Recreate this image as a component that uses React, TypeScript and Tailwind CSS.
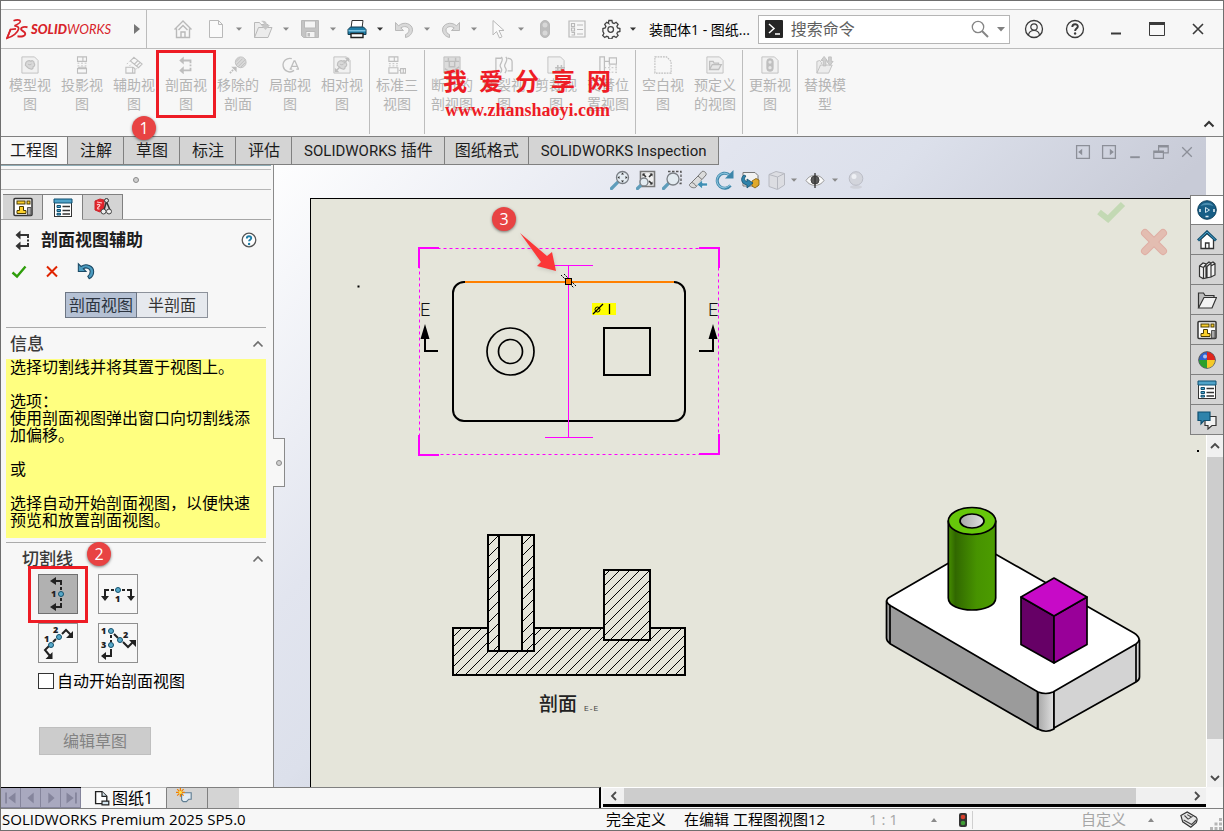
import type { ReactNode } from 'react';
import clsx from 'clsx';

type IconProps = { children: ReactNode; size?: string; box?: string; className?: string };

function Icon({ children, size = 'size-5', box = '0 0 20 20', className }: IconProps) {
  return (
    <svg viewBox={box} className={clsx('shrink-0', size, className)} fill="none" stroke="currentColor" aria-hidden="true">
      {children}
    </svg>
  );
}

function Caret({ className = 'text-[#8a8a8a]' }: { className?: string }) {
  return (
    <svg viewBox="0 0 8 8" className={clsx('size-2 shrink-0', className)} aria-hidden="true">
      <path d="M1 2.500h6L4 5.800z" fill="currentColor" />
    </svg>
  );
}

function Badge({ n, className }: { n: number; className: string }) {
  return (
    <span
      className={clsx(
        'absolute z-20 flex size-6 items-center justify-center rounded-full bg-[#e84343] text-base leading-none text-white shadow-[0_1px_3px_rgba(0,0,0,0.5)]',
        className,
      )}
    >
      {n}
    </span>
  );
}

/* ---------- shared glyphs ---------- */

const sheetOutline = <path d="M1 1h14l4 4v14H1z" fill="#f1f1f1" />;

const sectionGlyph = (
  <g strokeWidth="2">
    <path d="M6 5h9v3M15 9.500v2M15 13v3H6" />
    <path d="M7.500 .5v9L2.500 5zM7.500 11.500v9l-5-4.500z" fill="currentColor" stroke="none" />
  </g>
);

const drawingGlyph = (
  <>
    <rect x="1" y="1.500" width="18" height="17" rx="1" fill="#fff" stroke="#333" strokeWidth="1.500" />
    <rect x="4" y="4" width="8" height="3" fill="#fbd02c" stroke="#4a3b00" />
    <rect x="14" y="4" width="3" height="3" fill="#fbd02c" stroke="#4a3b00" />
    <path d="M6.500 9.500h4v4h2.500v3H4v-3h2.500z" fill="#fbd02c" stroke="#4a3b00" />
    <path d="M14.500 18v-7.500H18V18z" fill="#aaa" stroke="#555" />
  </>
);

const propertyGlyph = (
  <>
    <rect x="1.500" y="1.500" width="17" height="17" fill="#fff" stroke="#333" />
    <path d="M1 1h18v4H1z" fill="#4fa3c9" stroke="#0f4f70" />
    <path d="M4 7.500h3.500v2H4zM4 11.500h3.500v2H4zM4 15.300h3.500v1.700H4z" fill="#4fa3c9" stroke="#0f4f70" />
    <path d="M9.500 8.500H17M9.500 12.500H17M9.500 16H17" stroke="#333" strokeWidth="1.300" />
  </>
);

/* ---------- title bar ---------- */

function DsLogo() {
  return (
    <Icon box="0 0 22 21" size="h-[21px] w-[22px]" className="text-[#d8232a]">
      <path d="M7.500 1.800C10 .8 14 .4 14.300 2.200 14.500 3.700 11 5.700 8.500 6.800c2.500.2 4.700 1 4 3.500C11.700 13.500 7 17.500 1 19.300L4.800 10" strokeWidth="1.700" />
      <path d="M1 19.300 4.500 10.500l5.500-.7" strokeWidth="1.700" />
      <path d="M21.500 8.200c-3-.7-6.500-.2-6.500 1.700 0 2 4.500 2.600 4.300 5.100-.2 2.200-3.800 3-7.800 2.300" strokeWidth="1.900" />
    </Icon>
  );
}

const titleTools: { label: string; caret?: boolean; dark?: boolean; glyph: ReactNode }[] = [
  {
    label: '新建',
    caret: true,
    glyph: <path d="M3.500 1.500h9l4 4v13h-13zM12.500 1.500v4h4" fill="#fafafa" />,
  },
  {
    label: '打开',
    caret: true,
    glyph: (
      <>
        <path d="M1.500 18.500v-15h5l1.500 2h7v3M1.500 18.500l4-10H19l-4 10z" fill="#ececec" />
        <path d="M8 2c4-1 6 1 6 4h3l-4.500 5L8 6h3c0-2-1-3-3-4z" fill="#c6c6c6" stroke="none" />
      </>
    ),
  },
  {
    label: '保存',
    caret: true,
    glyph: (
      <>
        <path d="M1.500 1.500h17v17h-15l-2-2z" fill="#c4c4c4" />
        <path d="M4.500 2h11v7h-11z" fill="#f4f4f4" />
        <path d="M6 12.500h9v6H6z" fill="#f4f4f4" />
        <path d="M7.500 14h2.500v3.500H7.500z" fill="#bbb" stroke="none" />
      </>
    ),
  },
  {
    label: '打印',
    caret: true,
    dark: true,
    glyph: (
      <>
        <path d="M5 1.500h11l-1 8H4z" fill="#fff" stroke="#333" />
        <path d="M1 10.500 3.500 8h13L19 10.500v5H1z" fill="#1f7da6" stroke="#123c50" />
        <path d="M1.500 11h17v1.500h-17z" fill="#7fc4e2" stroke="none" />
        <path d="M4 14.500h12v4H4z" fill="#fff" stroke="#222" strokeWidth="1.400" />
      </>
    ),
  },
  {
    label: '撤消',
    caret: true,
    glyph: <path d="M1.500 3.500v8h8L6.800 9c3-2.500 8-1.500 8.200 1.800.1 2.400-1.500 4-3.500 4.700v3c4-.8 7-4 7-7.700 0-6-8.500-9-14-4z" fill="#d9d9d9" />,
  },
  {
    label: '重做',
    caret: true,
    glyph: <path d="M18.500 3.500v8h-8L13.200 9C10.200 6.500 5.200 7.500 5 10.800c-.1 2.400 1.500 4 3.500 4.700v3c-4-.8-7-4-7-7.700 0-6 8.500-9 14-4z" fill="#d9d9d9" />,
  },
  {
    label: '选择',
    caret: true,
    glyph: <path d="M5 1.500v14.500l3.500-3.500 3 6.500 2.500-1.200-3-6.300H16z" fill="#fafafa" />,
  },
];

function TitleBar() {
  return (
    <header className="flex h-[39px] shrink-0 items-center border-b border-[#bcbcbc]">
      <div className="flex h-full w-[146px] shrink-0 items-center border-r border-[#bcbcbc] pl-[5px]">
        <DsLogo />
        <span className="ml-[3px] font-['Lato',sans-serif] text-[13px] leading-none text-[#d8232a] italic">
          <b className="font-black">SOLID</b>WORKS
        </span>
        <button aria-label="展开菜单" className="mr-[6px] ml-auto">
          <Icon box="0 0 6 10" size="h-[10px] w-[6px]">
            <path d="M0 0l6 5-6 5z" fill="#777" stroke="none" />
          </Icon>
        </button>
      </div>

      <div className="flex shrink-0 items-center gap-[10px] pl-[26px] text-[#b9b9b9]">
        <button aria-label="主页" className="mr-[3px]">
          <Icon>
            <path d="M1.500 10.500 10 2l8.500 8.500M3.500 9.500v9h13v-9M8 18.500V13h4v5.500M5.500 11l4.500-4.500 4.500 4.500" strokeWidth="1.400" />
          </Icon>
        </button>
        {titleTools.map((t) => (
          <span key={t.label} className="flex items-center gap-[9px]">
            <button aria-label={t.label}>
              <Icon>{t.glyph}</Icon>
            </button>
            <button aria-label={`${t.label}选项`}>
              <Caret className={t.dark ? 'text-[#333]' : undefined} />
            </button>
          </span>
        ))}
        <button aria-label="重建">
          <Icon>
            <rect x="5.500" y="1.500" width="9" height="17" rx="4.500" fill="#bdbdbd" />
            <circle cx="10" cy="6" r="2.500" fill="#d8d8d8" stroke="none" />
            <circle cx="10" cy="14" r="2.500" fill="#d8d8d8" stroke="none" />
          </Icon>
        </button>
        <button aria-label="文件属性" className="ml-[2px]">
          <Icon>
            <path d="M2 2h16v16H2zM4.500 4.500h3v3h-3zM4.500 9h3v3h-3zM4.500 13.500h3v2.500h-3M10 6h6M10 10.500h6M10 15h6" strokeWidth="1.200" />
          </Icon>
        </button>
        <span className="ml-1 flex items-center gap-2 text-[#444]">
          <button aria-label="选项">
            <Icon>
              <path
                d="M8.500 2h3l.5 2.200 1.700.8 2-1.200 2 2-1.200 2 .7 1.700 2.300.5v3l-2.300.5-.7 1.500 1.200 2-2 2-2-1.200-1.700.7-.5 2h-3l-.5-2-1.700-.7-2 1.200-2-2 1.200-2-.7-1.500L2.500 13v-3l2.300-.5.7-1.700-1.200-2 2-2 2 1.200L8 4.200z"
                transform="translate(-.6 -.5)"
                strokeWidth="1.300"
              />
              <circle cx="9.700" cy="10.500" r="2.800" strokeWidth="1.300" />
            </Icon>
          </button>
          <Caret className="text-[#333]" />
        </span>
      </div>

      <h1 className="ml-[12px] shrink-0 text-[14px] whitespace-nowrap text-black">装配体1 - 图纸...</h1>

      <label className="ml-2 flex h-[29px] min-w-0 flex-1 items-center border border-[#b5b5b5] bg-white pr-1 pl-[6px]">
        <Icon box="0 0 18 18" size="size-[18px]" className="text-white">
          <rect width="18" height="18" rx="1" fill="#262626" stroke="none" />
          <path d="M4 4l5 4.500L4 13M10 14h5" strokeWidth="1.500" />
        </Icon>
        <input
          aria-label="搜索命令"
          placeholder="搜索命令"
          className="ml-2 min-w-0 flex-1 bg-transparent text-base text-black outline-none placeholder:text-[#5f5f5f]"
        />
        <Icon box="0 0 18 18" size="size-[18px]" className="mr-2 text-[#858585]">
          <circle cx="7" cy="7" r="5.700" strokeWidth="1.300" />
          <path d="M11 11l6 6" strokeWidth="2" />
        </Icon>
        <svg viewBox="0 0 8 5" className="h-[5px] w-2">
          <path d="M0 0h8L4 4.500z" fill="#808080" />
        </svg>
      </label>

      <div className="ml-[3px] flex shrink-0 items-center pr-[5px] text-[#3a3a3a] *:flex *:w-[41px] *:justify-center">
        <button aria-label="登录">
          <Icon>
            <circle cx="10" cy="10" r="8.500" strokeWidth="1.300" />
            <circle cx="10" cy="8" r="3.200" strokeWidth="1.200" />
            <path d="M4.500 16c.5-3 2.500-4.500 5.500-4.500s5 1.500 5.500 4.500" strokeWidth="1.200" />
          </Icon>
        </button>
        <button aria-label="帮助">
          <Icon>
            <circle cx="10" cy="10" r="8.500" strokeWidth="1.300" />
            <path d="M7.300 8c0-3.600 5.500-3.600 5.500-.5 0 2-2.700 2.200-2.700 4.500" strokeWidth="1.900" />
            <circle cx="10.100" cy="14.500" r="1.200" fill="currentColor" stroke="none" />
          </Icon>
        </button>
        <button aria-label="最小化">
          <Icon>
            <path d="M5 14.500h10" strokeWidth="2" />
          </Icon>
        </button>
        <button aria-label="最大化">
          <Icon>
            <path d="M2.500 3.500h15v13h-15z" strokeWidth="1" />
            <path d="M2 4.500h16" strokeWidth="3" />
          </Icon>
        </button>
        <button aria-label="关闭">
          <Icon>
            <path d="M5 5l10 10M15 5L5 15" strokeWidth="1.600" />
          </Icon>
        </button>
      </div>
    </header>
  );
}

/* ---------- ribbon ---------- */

type RibbonItem = { label: string; glyph: ReactNode; marked?: boolean };

const blob = (
  <path
    d="M5 9c0-3 4-5 6-3 1-1.500 4-.5 3.500 2 1.500 1.500.500 3.500-1 4 .500 2-2 3.500-3.500 2-2 .500-2.500-1.500-4-2.500-1-.500-1.500-1.500-1-2.500zM8 9c1 1 3 1 3.500-.500"
    fill="#d8d8d8"
    strokeWidth="1.300"
  />
);

const ribbonGroups: RibbonItem[][] = [
  [
    {
      label: '模型视图',
      glyph: (
        <>
          {sheetOutline}
          {blob}
        </>
      ),
    },
    {
      label: '投影视图',
      glyph: (
        <>
          <path d="M5 1h10v5H5zM11 1v5M5 14h10v5H5zM5 14l2-1.500h7l1 1.500" strokeWidth="1.200" />
          <path d="M5 8h10M5 11h10" strokeDasharray="2 2" />
        </>
      ),
    },
    {
      label: '辅助视图',
      glyph: (
        <>
          <path d="M10 1.500l9 7.500-4 4-9-7.500zM14.500 5l-4 4M17 7l-4 4" strokeWidth="1.200" />
          <path d="M1 12.500h7.500V19H1zM8.500 12.500l2.500 1.500v5H8" strokeWidth="1.200" />
          <path d="M2 9l4-4M5 11l3-3M12 15l2-2" strokeDasharray="2 2" />
        </>
      ),
    },
    { label: '剖面视图', glyph: sectionGlyph, marked: true },
    {
      label: '移除的剖面',
      glyph: (
        <>
          <circle cx="13" cy="7" r="6" fill="#d9d9d9" />
          <path d="M8 10l7-7M10 12l8-8M8 6l4-4M13 12.500l5-5" />
          <path d="M1 19l4-4" strokeWidth="2" strokeDasharray="2 1" />
          <path d="M2.500 12h6v6z" fill="currentColor" stroke="none" />
        </>
      ),
    },
    {
      label: '局部视图',
      glyph: (
        <>
          <path d="M12 3A7.500 7.500 0 1 0 14.500 16" strokeWidth="1.500" />
          <path d="M10.500 14.500l4-9h1l4 9M12 11.500h6M9.500 14.500h3M17 14.500h3" strokeWidth="1.400" />
        </>
      ),
    },
    {
      label: '相对视图',
      glyph: (
        <>
          {sheetOutline}
          {blob}
          <path d="M3 17l5-5M12 8l5-5" strokeWidth="1.600" />
          <path d="M2 13v5h5zM13 2h5v5z" fill="currentColor" stroke="none" />
        </>
      ),
    },
  ],
  [
    {
      label: '标准三视图',
      glyph: (
        <>
          <path d="M1 1h10v5H1zM7 1v5M1 13h10v6H1zM14 14h5.500v5H14zM17 14v5" strokeWidth="1.200" />
          <path d="M1 8.500h10M1 11h10M12 16h2" strokeDasharray="2 2" />
        </>
      ),
    },
  ],
  [
    {
      label: '断开的剖视图',
      glyph: (
        <>
          <path d="M1 1h18v18H1z" fill="#dcdcdc" />
          <path d="M2 6h16M6 2v4M14 2v4M7 6v6h6V6M2 14l6 4M12 16l6-4" strokeWidth="1.600" />
        </>
      ),
    },
    {
      label: '断裂视图',
      glyph: <path d="M7 2.500H1v14h5M7 1c4 4-3 8-1 11s2 4 0 7M12 1c4 4-3 8-1 11s2 4 0 7M14 2.500c2 0 5 1 5 4v10h-5" strokeWidth="1.400" />,
    },
    {
      label: '剪裁视图',
      glyph: (
        <>
          {sheetOutline}
          <path d="M9 13h11M12 10v9M16 10v9M9 16h11" strokeWidth="1.700" />
        </>
      ),
    },
    {
      label: '交替位置视图',
      glyph: (
        <>
          <path d="M1 1h5v18H1zM6 6h6M11.500 2h8v7h-8z" strokeWidth="1.400" />
          <path d="M6 13h14M6 18h14M12 10v9M19 10v9" strokeDasharray="2 2" />
        </>
      ),
    },
  ],
  [
    { label: '空白视图', glyph: <path d="M1 1h13l5 5v13H1z" strokeWidth="1.200" strokeDasharray="2 1" /> },
    {
      label: '预定义的视图',
      glyph: (
        <>
          {sheetOutline}
          <path d="M4 15V6h4l1 2h5v2M4 15l3-5.500h10L14 15z" fill="#e6e6e6" strokeWidth="1.400" />
        </>
      ),
    },
  ],
  [
    {
      label: '更新视图',
      glyph: (
        <>
          {sheetOutline}
          <rect x="6.500" y="3" width="7" height="14" rx="3" fill="#c0c0c0" />
          <circle cx="10" cy="6.800" r="1.800" fill="#e6e6e6" stroke="none" />
          <circle cx="10" cy="13" r="1.800" fill="#e6e6e6" stroke="none" />
        </>
      ),
    },
  ],
  [
    {
      label: '替换模型',
      glyph: (
        <>
          <path d="M1 19V6l3-1 2 2v2M1 19l4-9h13l-4 9z" fill="#ececec" />
          <path d="M8 11V5H5.500L9 .5 12.500 5H11v6zM14 1v5h-2l3.500 4.500L19 6h-2V1z" fill="#d0d0d0" />
        </>
      ),
    },
  ],
];

function Ribbon() {
  return (
    <section className="relative flex h-[88px] shrink-0 border-b border-[#808080] pl-[3px]">
      {ribbonGroups.map((group, i) => (
        <div
          key={i}
          className={clsx(
            'mt-px mb-[2px] flex shrink-0 pt-[3px] pr-px',
            i > 0 && 'pl-px',
            i < ribbonGroups.length - 1 && 'border-r border-[#bdbdbd]',
          )}
        >
          {group.map((item) => (
            <button
              key={item.label}
              className="relative flex w-[52px] flex-col items-center px-1 pt-[3px] text-[14px] leading-[19px] text-[#b4b4b4]"
            >
              <Icon size="size-[18px]" className="mb-px text-[#bebebe]">
                {item.glyph}
              </Icon>
              {item.label}
              {item.marked && (
                <span className="pointer-events-none absolute -top-[3px] -left-1 h-[68px] w-[60px] border-[3px] border-[#ee1c25]" />
              )}
            </button>
          ))}
        </div>
      ))}

      <button aria-label="折叠工具栏" className="mt-auto mr-2 mb-2 ml-auto text-[#333]">
        <Icon box="0 0 12 8" size="h-2 w-3">
          <path d="M1.500 6.500 6 2l4.500 4.500" strokeWidth="2" />
        </Icon>
      </button>

      <Badge n={1} className="top-[67px] left-[131px]" />

      {/* Watermark */}
      <div className="pointer-events-none absolute top-[16px] left-[442px] font-bold text-[#ee1c25]">
        <p className="flex gap-3 text-[24px] leading-[32px]">
          {[...'我爱分享网'].map((c) => (
            <span key={c}>{c}</span>
          ))}
        </p>
        <p className="px-[2px] font-['Liberation_Serif',serif] text-[18px] leading-[26px]">www.zhanshaoyi.com</p>
      </div>
    </section>
  );
}

/* ---------- command tabs ---------- */

const commandTabs: { latin?: string; text?: string }[] = [
  { text: '工程图' },
  { text: '注解' },
  { text: '草图' },
  { text: '标注' },
  { text: '评估' },
  { latin: 'SOLIDWORKS', text: ' 插件' },
  { text: '图纸格式' },
  { latin: 'SOLIDWORKS Inspection' },
];

function CommandTabs() {
  return (
    <div className="flex h-7 shrink-0 items-stretch">
      <nav className="flex text-base leading-[27px] text-[#1c1c1c]">
        {commandTabs.map(({ latin, text }, i) => (
          <button
            key={i}
            className={clsx(
              'border-r border-b border-[#808080] whitespace-nowrap',
              i === 0 ? 'bg-[#f7f7f7] px-[9px]' : 'bg-[#d4d4d4]',
              i > 0 && (text === '图纸格式' ? 'pr-[9px] pl-[10px]' : 'pr-[11px] pl-3'),
            )}
          >
            {latin && <span className="font-['Roboto',sans-serif] text-[15px]">{latin}</span>}
            {text}
          </button>
        ))}
      </nav>
      <div className="ml-auto flex items-center gap-[10px] pt-[2px] pr-[11px] text-[#8c8f98]">
        <button aria-label="左侧窗格">
          <Icon size="size-4">
            <path d="M2 2h16v16H2z" strokeWidth="1.600" />
            <path d="M9 6v8l-5-4z" fill="currentColor" stroke="none" />
          </Icon>
        </button>
        <button aria-label="右侧窗格">
          <Icon size="size-4">
            <path d="M2 2h16v16H2z" strokeWidth="1.600" />
            <path d="M11 6v8l5-4z" fill="currentColor" stroke="none" />
          </Icon>
        </button>
        <button aria-label="最小化文档">
          <Icon size="size-4">
            <path d="M4 16.500h12" strokeWidth="2.400" />
          </Icon>
        </button>
        <button aria-label="还原文档">
          <Icon size="size-4">
            <path d="M1 9h12v9H1zM7 9V2h12v9h-6M1 10.500h12M7 3.500h12" strokeWidth="1.500" />
          </Icon>
        </button>
        <button aria-label="关闭文档">
          <Icon size="size-4">
            <path d="M4 4l12 12M16 4L4 16" strokeWidth="1.600" />
          </Icon>
        </button>
      </div>
    </div>
  );
}

/* ---------- property manager ---------- */

function Node({ x, y }: { x: number; y: number }) {
  return <circle cx={x} cy={y} r="2.500" fill="#58a9ca" stroke="#12506c" strokeWidth="1" />;
}

function Num({ x, y, children }: { x: number; y: number; children: string }) {
  return (
    <text x={x} y={y} fontSize="9" fontWeight="900" fill="#222" stroke="none">
      {children}
    </text>
  );
}

const cutLines: { label: string; glyph: ReactNode }[] = [
  {
    label: '竖直',
    glyph: (
      <>
        <path d="M16 7h7v4M23 13v3M23 24v3M23 29v4h-7" strokeWidth="2" />
        <path d="M18 3v8l-6-4zM18 29v8l-6-4z" fill="#222" stroke="none" />
        <Num x={13} y={23}>1</Num>
        <Node x={23} y={20} />
      </>
    ),
  },
  {
    label: '水平',
    glyph: (
      <>
        <path d="M7 23v-7h4M13 16h3M24 16h3M29 16h4v7" strokeWidth="2" />
        <path d="M3 22h8l-4 5zM29 22h8l-4 5z" fill="#222" stroke="none" />
        <Num x={17} y={28}>1</Num>
        <Node x={20} y={16} />
      </>
    ),
  },
  {
    label: '对齐',
    glyph: (
      <>
        <path d="M12 33l-5-6 4-4M15 19l3-3M24 11l4-4 5 5" strokeWidth="2" />
        <path d="M14.500 29v7h-7zM35 8v7h-7z" fill="#222" stroke="none" />
        <Num x={6} y={19}>1</Num>
        <Num x={15} y={10}>2</Num>
        <Node x={13} y={22} />
        <Node x={21} y={14} />
      </>
    ),
  },
  {
    label: '点折',
    glyph: (
      <>
        <path d="M13 12v3M13 17v2M13 26v7H6M16 11l4 4M25 19l5 5 5-5" strokeWidth="2" />
        <path d="M8 29v8l-5-4zM31 17h7v7z" fill="#222" stroke="none" />
        <Num x={3} y={11}>1</Num>
        <Num x={25} y={15}>2</Num>
        <Num x={3} y={25}>3</Num>
        <Node x={13} y={8} />
        <Node x={22} y={17} />
        <Node x={13} y={22} />
      </>
    ),
  },
];

function Chevron() {
  return (
    <Icon box="0 0 12 8" size="h-2 w-3" className="text-[#6e6e6e]">
      <path d="M1.500 6.500 6 2l4.500 4.500" strokeWidth="1.700" />
    </Icon>
  );
}

function PropertyPanel() {
  return (
    <aside className="relative flex w-[273px] shrink-0 flex-col border-r border-[#8a8a8a] bg-[#f7f7f7]">
      <div className="mr-[2px] h-[5px] border-t border-b border-t-[#8fadb6] border-b-[#bcbcbc]" />
      <div className="mr-[2px] flex h-5 items-center justify-center border-b border-[#b5b5b5]">
        <span className="size-[6px] rounded-full border border-[#8a8a8a] bg-[#cfcfcf]" />
      </div>

      <div className="mt-1 mr-[2px] flex h-[26px] border-b border-[#a6a6a6] pl-[2px]">
        <button aria-label="特征树" className="flex w-10 items-center justify-center border-t border-r border-[#808080] bg-[#d4d4d4]">
          <Icon>{drawingGlyph}</Icon>
        </button>
        <button aria-label="属性" className="-mb-px flex w-[39px] items-center justify-center border-t border-[#808080] bg-[#f7f7f7]">
          <Icon>{propertyGlyph}</Icon>
        </button>
        <button aria-label="尺寸专家" className="flex w-[41px] items-center justify-center border-t border-r border-l border-[#808080] bg-[#d4d4d4]">
          <Icon>
            <path d="M2 4l5-2 4 1v9l-4 3-5-2z" fill="#e3242b" stroke="#c9252b" />
            <path d="M4 5l5 1M4 8c2-1.500 4 0 2 1.500S4 12 6.500 12" stroke="#ffd0d0" strokeWidth="1.200" />
            <path d="M13.500 2v4M13 6l-2 7M14 6l3 7" stroke="#333" strokeWidth="1.500" />
            <circle cx="13.500" cy="3.500" r="2" fill="#ddd" stroke="#333" />
            <circle cx="10.500" cy="14.500" r="2.500" fill="#eee" stroke="#444" />
            <circle cx="16" cy="14.500" r="2.500" fill="#eee" stroke="#444" />
          </Icon>
        </button>
      </div>

      <div className="mt-[7px] mr-4 ml-3 flex h-[26px] items-center">
        <Icon className="text-[#333]">{sectionGlyph}</Icon>
        <h2 className="ml-2 text-[17px] font-bold text-[#1d1d1d]">剖面视图辅助</h2>
        <button aria-label="帮助" className="ml-auto">
          <Icon size="size-4">
            <circle cx="10" cy="10" r="8.500" fill="#fff" stroke="#555" strokeWidth="1.600" />
            <path d="M7.300 8c0-3.600 5.500-3.600 5.500-.5 0 2-2.700 2.200-2.700 4" stroke="#1f7da6" strokeWidth="2.400" />
            <circle cx="10.100" cy="15" r="1.500" fill="#1f7da6" stroke="none" />
          </Icon>
        </button>
      </div>

      <div className="mt-[9px] ml-[10px] flex h-[18px] items-center gap-[17px]">
        <button aria-label="确定">
          <Icon box="0 0 16 16" size="size-4">
            <path d="M1.500 9.500 6 13.500 14.500 3.500" stroke="#2f9e0b" strokeWidth="2.400" />
          </Icon>
        </button>
        <button aria-label="取消">
          <Icon box="0 0 16 16" size="size-4">
            <path d="M3 3.500l10 10M13 3.500l-10 10" stroke="#e02400" strokeWidth="2" />
          </Icon>
        </button>
        <button aria-label="撤消">
          <Icon size="size-[18px]">
            <path d="M1.500 2v8.500H10L7 7.500c3-2 7.500-.5 7.700 2.800.1 2.400-1 4.200-2.700 5.700l1.500 2.500c3.500-1.500 5-4.700 5-8C18.500 4 10 1 4.500 5z" fill="#4c9cc0" stroke="#1c4a66" strokeWidth="1.200" />
          </Icon>
        </button>
      </div>

      <div className="mt-3 ml-16 flex h-[26px] w-[143px] text-base leading-6">
        <button className="flex-1 border border-[#6d7684] bg-[#b5c1d4] text-[#2c3440]">剖面视图</button>
        <button className="flex-1 border border-l-0 border-[#8d929b] bg-[#e6e9ee] text-[#333]">半剖面</button>
      </div>

      <section className="mt-[9px] mr-[7px] ml-[5px] border-t border-[#ababab]">
        <div className="flex h-[31px] items-center justify-between pr-[2px] pl-1">
          <h3 className="text-[17px] font-medium text-[#3a3a3a]">信息</h3>
          <button aria-label="折叠信息">
            <Chevron />
          </button>
        </div>
        <div className="h-[179px] bg-[#ffff80] pr-4 pl-1 text-base leading-[17px] text-black">
          <p>选择切割线并将其置于视图上。</p>
          <p className="mt-[17px]">选项：</p>
          <p>使用剖面视图弹出窗口向切割线添加偏移。</p>
          <p className="mt-[17px]">或</p>
          <p className="mt-[17px]">选择自动开始剖面视图，以便快速预览和放置剖面视图。</p>
        </div>
      </section>

      <section className="relative mt-1 mr-[7px] ml-[5px] border-t border-[#ababab]">
        <div className="flex h-[31px] items-center justify-between pr-[2px] pl-4">
          <h3 className="text-[17px] font-medium text-[#3a3a3a]">切割线</h3>
          <button aria-label="折叠切割线">
            <Chevron />
          </button>
        </div>
        <div className="ml-8 grid w-[100px] grid-cols-2 gap-x-5 gap-y-[9px] text-[#222]">
          {cutLines.map((c, i) => (
            <button
              key={c.label}
              aria-label={c.label}
              className={clsx('size-10 border', i === 0 ? 'border-[#707070] bg-[#b1b1b1]' : 'border-[#8f8f8f] bg-[#f7f7f7]')}
            >
              <Icon box="1 1 38 38" size="size-[38px]">
                {c.glyph}
              </Icon>
            </button>
          ))}
        </div>
        <span className="pointer-events-none absolute top-[23px] left-[22px] h-[57px] w-[60px] border-[3px] border-[#ee1c25]" />
        <Badge n={2} className="-top-px left-[81px]" />

        <label className="mt-[6px] ml-8 flex h-6 items-center gap-[3px] text-base text-black">
          <input type="checkbox" className="size-4 appearance-none border border-[#333] bg-white checked:bg-[#58a9ca]" />
          自动开始剖面视图
        </label>
        <button disabled className="mt-[34px] ml-[33px] block h-7 w-28 border border-[#bfbfbf] bg-[#cccccc] text-base leading-6 text-[#838383]">
          编辑草图
        </button>
      </section>

      {/* Splitter handle */}
      <div className="absolute top-[273px] -right-3 z-10 flex h-[49px] w-3 items-center justify-center border border-l-0 border-[#8a8a8a] bg-[#f7f7f7]">
        <span className="size-[6px] rounded-full border border-[#8a8a8a] bg-[#cfcfcf]" />
      </div>
    </aside>
  );
}

/* ---------- heads-up view toolbar ---------- */

const lens = (x: number, y: number, r: number) => (
  <>
    <path d={`M1.500 18.500 ${x - r * 0.7} ${y + r * 0.7}`} stroke="#5f9dbb" strokeWidth="3.200" strokeLinecap="round" />
    <circle cx={x} cy={y} r={r} fill="#e3ebf1" stroke="#7a7f85" strokeWidth="1.300" />
  </>
);

function ViewToolbar() {
  return (
    <div className="flex h-[33px] shrink-0 items-center justify-center gap-[6px] pr-[5px] pb-1">
      <button aria-label="缩放">
        <Icon>
          {lens(12.5, 7.5, 6)}
          <path d="M12.500 2.500l1.500 2h-3zM12.500 12.500l1.500-2h-3zM7.500 7.500l2-1.500v3zM17.500 7.500l-2-1.500v3z" fill="#333" stroke="none" />
        </Icon>
      </button>
      <button aria-label="整屏显示">
        <Icon>
          <path d="M4.500 1.500h14v15h-14z" fill="#f0f0f0" stroke="#777" strokeWidth="1.600" />
          <path d="M7 4l3 3M16 4l-3 3M16 14l-3-3" stroke="#333" strokeWidth="1.600" />
          <path d="M6.500 3.500h3l-3 3zM16.500 3.500h-3l3 3zM16.500 14.500h-3l3-3z" fill="#333" stroke="none" />
          {lens(8, 12, 4)}
        </Icon>
      </button>
      <button aria-label="局部放大">
        <Icon>
          <path d="M6 1.500h13v12h-3" stroke="#555" strokeWidth="1.300" strokeDasharray="2.500 1.500" />
          {lens(11, 9, 6)}
        </Icon>
      </button>
      <button aria-label="上一视图">
        <Icon>
          <path d="M1.500 14.500 10 6l4-4.500c2-1 5 1.500 4 3.500l-4 4.500-6.500 8c-3 1-6.500-1-6-3z" fill="#dcdcdc" stroke="#777" />
          <path d="M10 6l4 3.500M3 12.500c2 0 4 1.500 5 3.500" stroke="#777" />
          <path d="M19.500 16h-5v3l-5.500-4.500 5.500-4.500v3h5z" fill="#3f8fb5" stroke="#fff" strokeWidth=".6" />
        </Icon>
      </button>
      <button aria-label="旋转视图">
        <Icon>
          <path d="M16.500 15.500A7.500 7.500 0 1 1 15 4.500" stroke="#3d86aa" strokeWidth="3" />
          <path d="M16 15A7.300 7.300 0 1 1 15 5" stroke="#8cc3dc" strokeWidth="1.200" />
          <path d="M19.500 0v8.500H11z" fill="#3d86aa" stroke="none" />
        </Icon>
      </button>
      <button aria-label="3D 工程图视图">
        <Icon>
          <path d="M3 2.500h12l3 3V16H3z" fill="#f2f2f2" stroke="#777" />
          <path d="M12 11l4-2.500 3 1.500v5l-4 3-3-2z" fill="#e0a92b" stroke="#7d5b0b" strokeWidth=".8" />
          <path d="M4 5c-4 3-3 9 3 10v3l6-5-6-4v2.500C4.500 11 3.500 8.500 6 6z" fill="#2f83ab" stroke="#14506e" strokeWidth=".8" />
        </Icon>
      </button>
      <span className="ml-px flex items-center gap-[3px]">
        <button aria-label="显示样式">
          <Icon>
            <path d="M2 4.500 9 1.500l8.500 2v11.500l-7 4.500L2 16.500zM2 4.500l8.500 2.500v12M10.500 7l7-3.500" fill="#dcdde2" stroke="#b6b8c0" />
          </Icon>
        </button>
        <Caret />
      </span>
      <span className="ml-px flex items-center gap-[6px]">
        <button aria-label="隐藏/显示项目">
          <Icon>
            <path d="M1 10.500C5 3.500 15 3.500 19 10.500 15 17 5 17 1 10.500z" fill="#fafafa" stroke="#9a9a9a" />
            <circle cx="10" cy="10" r="4" fill="#5a5a5a" stroke="#444" />
            <path d="M10 3v15" stroke="#333" strokeWidth="1.300" />
          </Icon>
        </button>
        <Caret />
      </span>
      <button aria-label="视图设置" className="ml-px">
        <Icon>
          <ellipse cx="10" cy="17" rx="6" ry="1.800" fill="#d0d2da" stroke="none" />
          <circle cx="10" cy="8.500" r="6.800" fill="#d3d5dc" stroke="#bbbdc6" />
          <circle cx="8" cy="6.500" r="2.500" fill="#eef0f4" stroke="none" />
        </Icon>
      </button>
    </div>
  );
}

/* ---------- drawing sheet ---------- */

function PlanView() {
  return (
    <g fill="none">
      <rect x="419.500" y="248.500" width="299" height="206" stroke="#f0f" strokeDasharray="3 3" />
      <path d="M419 268v-20h20M699 248h20v20M719 434v20h-20M439 455h-20v-20" stroke="#f0f" strokeWidth="2" />
      <rect x="453" y="282" width="232" height="139" rx="11" stroke="#000" strokeWidth="2" />
      <path d="M465 282h209" stroke="#ff8000" strokeWidth="2" />
      <circle cx="510.500" cy="351.500" r="23.500" stroke="#000" strokeWidth="1.700" />
      <circle cx="510.500" cy="351.500" r="12" stroke="#000" strokeWidth="1.700" />
      <rect x="604" y="328" width="46" height="47" stroke="#000" strokeWidth="2" />
      <path d="M568.500 265.500v172M553 265.500h40M545 437.500h48" stroke="#f0f" />
      <path d="M561 275l13 13M564 274l12 12" stroke="#000" strokeDasharray="2 1" />
      <rect x="565.500" y="278.500" width="6" height="6" fill="#ff8000" stroke="#000" />

      <rect x="592" y="303" width="24" height="12" fill="#ff0" />
      <path d="M593 314l10-10M609.500 304v10" stroke="#000" strokeWidth="1.300" />
      <circle cx="597.500" cy="309.500" r="2.500" stroke="#000" />

      <g fontSize="18" fill="#111" className="font-['Roboto',sans-serif] font-light">
        <text x="420" y="316">E</text>
        <text x="708" y="316">E</text>
      </g>
      <path d="M425 338v13h13M713 338v13h-14" stroke="#000" strokeWidth="2" />
      <path d="M425 324l4.500 15h-9zM713 324l4.500 15h-9z" fill="#000" />
      <path d="M520 233l27 23 5-4 4 19-19-5 4-4z" fill="#fb3838" className="drop-shadow-sm" />
    </g>
  );
}

function SectionView() {
  return (
    <g stroke="#000" strokeWidth="2">
      <path d="M453 628h35v23h46v-23h70v12h46v-12h35v47H453z" fill="url(#hatch)" />
      <rect x="488" y="535" width="46" height="116" fill="url(#hatchFine)" />
      <rect x="499" y="535" width="23" height="116" fill="#e5e5da" />
      <rect x="604" y="570" width="46" height="70" fill="url(#hatch)" />
      <text x="539" y="711" fontSize="19" fill="#222" stroke="none" className="font-medium">剖面</text>
      <text x="584" y="711" fontSize="8" fill="#444" stroke="none" className="font-['Liberation_Mono',monospace]">E-E</text>
    </g>
  );
}

function IsometricView() {
  return (
    <g stroke="#000" strokeWidth="1.700" strokeLinejoin="round">
      <path d="M886.500 601v37q0 3 4 6l147 85V691z" fill="#9b9b9b" />
      <path d="M1038 690v39q8 4.500 16 0v-39z" fill="url(#corner)" />
      <path d="M1054 690v38l82-46q3.500-2 3.500-5v-37z" fill="#d3d3d3" />
      <path d="M890 604v40M1136 644v38" />
      <path d="M890 597 966 553Q978 545 990 551L1134 633Q1143 639 1136 644L1053 692Q1046 695 1038 692L891 606Q883 601 890 597z" fill="#fff" />
      <path d="M948.300 521v77c0 16 47.400 16 47.400 0v-77z" fill="url(#tube)" />
      <ellipse cx="972" cy="521" rx="23.700" ry="13.500" fill="#66c70a" />
      <ellipse cx="972" cy="521" rx="12" ry="7" fill="url(#corner)" />
      <path d="M1021 597l33 19v47l-33-18.500z" fill="#660066" />
      <path d="M1087 597l-33 19v47l33-18.500z" fill="#990099" />
      <path d="M1054 578l33 19-33 19-33-19z" fill="#c70ac7" />
    </g>
  );
}

function Sheet() {
  return (
    <main className="ml-9 min-h-0 flex-1 overflow-hidden border-t border-l border-black bg-[#e5e5da]">
      <svg viewBox="311 199 895 588" className="h-[588px] w-[895px] max-w-none">
        <defs>
          <pattern id="hatch" width="10" height="10" patternUnits="userSpaceOnUse">
            <path d="M-1 11 11-1M-1 1l2-2M9 11l2-2" stroke="#000" strokeWidth="1" shapeRendering="crispEdges" />
          </pattern>
          <pattern id="hatchFine" width="11" height="11" patternUnits="userSpaceOnUse">
            <path d="M-1 12 12-1M-1 1l2-2M10 12l2-2" stroke="#000" strokeWidth="1" shapeRendering="crispEdges" />
          </pattern>
          <linearGradient id="tube">
            <stop offset="0" stopColor="#479000" />
            <stop offset=".15" stopColor="#316800" />
            <stop offset=".6" stopColor="#479300" />
            <stop offset="1" stopColor="#4c9c00" />
          </linearGradient>
          <linearGradient id="corner">
            <stop offset="0" stopColor="#a8a8a8" />
            <stop offset="1" stopColor="#e0e0e0" />
          </linearGradient>
        </defs>
        <PlanView />
        <SectionView />
        <IsometricView />
        <path d="M357.500 285.500h2v2h-2zM1197 450h2v2h-2z" fill="#000" />
        {/* Confirmation corner */}
        <path d="M1099 212l9 7 15-15" fill="none" stroke="#c3d9b4" strokeWidth="6" />
        <path d="M1145 233l18 18M1163 233l-18 18" stroke="#dfaea4" strokeWidth="8" strokeLinecap="round" />
        <path d="M1145 233l18 18M1163 233l-18 18" stroke="#e3bdb1" strokeWidth="6" strokeLinecap="round" />
      </svg>
    </main>
  );
}

/* ---------- task pane ---------- */

const taskPane: { label: string; glyph: ReactNode }[] = [
  {
    label: '3DEXPERIENCE',
    glyph: (
      <>
        <circle cx="10" cy="10" r="9.300" fill="#175e86" stroke="#0d3f5c" />
        <path d="M3.500 6a8 8 0 0 1 13 0c-4-1.500-9-1.500-13 0z" fill="#4a8db0" stroke="none" />
        <path d="M8.500 7.500v5l4-2.500z" stroke="#cfe3ee" />
        <path d="M3 9v3M17 9v3M8.500 16.500h3" stroke="#dfeaf1" strokeWidth="1.600" />
      </>
    ),
  },
  {
    label: '主页',
    glyph: (
      <>
        <path d="M4 9v9.500h12.500V9L10 3.500z" fill="#fff" stroke="#333" strokeWidth="1.300" />
        <path d="M8.500 18.500V13H12v5.500" stroke="#333" strokeWidth="1.300" />
        <path d="M1 10.500 10 2l9 8.500" stroke="#0f4f70" strokeWidth="3" />
        <path d="M1.500 10 10 2l8.500 8" stroke="#4fa3c9" strokeWidth="1" />
      </>
    ),
  },
  {
    label: '设计库',
    glyph: (
      <path
        d="M2.500 6 6 3l3 1v14l-3 .5-3.500-2zM2.500 6l4 1.500V18M9 4.500 12 2l2 1v14l-5 1M6.500 7.500 9 4.500M10 6.500V18M14 3l2-1 2 1.500V15l-4 2M10 6.500 14 3M14 6l4-2.500"
        fill="#f3f3f3"
        stroke="#333"
        strokeWidth="1.200"
      />
    ),
  },
  {
    label: '文件探索器',
    glyph: (
      <>
        <path d="M1.500 18V3h5l1.500 2.500h9V8" fill="#bdbdbd" stroke="#333" strokeWidth="1.200" />
        <path d="M1.500 18 7 7.500h12.500L15 18z" fill="#f3f3f3" stroke="#333" strokeWidth="1.200" />
      </>
    ),
  },
  { label: '视图调色板', glyph: drawingGlyph },
  {
    label: '外观',
    glyph: (
      <>
        <circle cx="10" cy="10" r="8.300" fill="#2f62d0" stroke="#555" />
        <path d="M10 10V2a8 8 0 0 1 8 8z" fill="#e1261c" stroke="none" />
        <path d="M10 10h8a8 8 0 0 1-8 8z" fill="#f5c927" stroke="none" />
        <path d="M10 10v8a8 8 0 0 1-8-8z" fill="#2ba02b" stroke="none" />
        <circle cx="8" cy="6.500" r="2" fill="#fff" fillOpacity=".6" stroke="none" />
      </>
    ),
  },
  { label: '自定义属性', glyph: propertyGlyph },
  {
    label: '论坛',
    glyph: (
      <>
        <path d="M8 6.500h11v9h-4l-4 3.500v-3.500H8z" fill="#f2f2f2" stroke="#333" strokeWidth="1.200" />
        <path d="M1 2h12v8.500H7L4 14v-3.500H1z" fill="#2f83ab" stroke="#0f4f70" strokeWidth="1.200" />
      </>
    ),
  },
];

function TaskPane() {
  return (
    <nav className="absolute top-[58px] right-0 z-10 flex w-[33px] flex-col border-t border-l border-[#808080]">
      {taskPane.map((t, i) => (
        <button
          key={t.label}
          aria-label={t.label}
          className={clsx(
            'flex w-full items-center justify-center border-b border-[#808080]',
            i === 0 ? 'h-[29px] bg-white' : 'h-[30px] bg-[#d4d4d4]',
          )}
        >
          <Icon>{t.glyph}</Icon>
        </button>
      ))}
    </nav>
  );
}

function Arrow({ d }: { d: string }) {
  return (
    <Icon box="0 0 10 10" size="size-[10px]" className="text-[#4a4a4a]">
      <path d={d} strokeWidth="1.800" />
    </Icon>
  );
}

/* ---------- bottom bars ---------- */

function SheetTabs() {
  const nav = [
    { label: '第一张', d: 'M4.500 4v12', tri: 'M15 4v12l-8-6z' },
    { label: '上一张', d: '', tri: 'M13 4v12l-7-6z' },
    { label: '下一张', d: '', tri: 'M7 4v12l7-6z' },
    { label: '最后一张', d: 'M15.500 4v12', tri: 'M5 4v12l8-6z' },
  ];
  return (
    <div className="flex h-[22px] shrink-0 border-b border-[#808080]">
      <div className="flex border-t border-black">
        {nav.map((n) => (
          <button key={n.label} aria-label={n.label} className="flex w-5 items-center justify-center border-r border-b border-[#85859c] bg-[#a9a9bf] text-[#85859c]">
            <Icon size="size-[18px]">
              <path d={n.d} strokeWidth="2" />
              <path d={n.tri} fill="currentColor" stroke="none" />
            </Icon>
          </button>
        ))}
      </div>
      <button className="flex w-[86px] items-center justify-center gap-[2px] border-t border-r border-[#808080] border-t-[#bbb] text-base leading-5 text-black">
        <Icon size="size-4">
          <path d="M2 17V2h8l6 6v9z" fill="#fff" stroke="#222" strokeWidth="1.700" />
          <path d="M10 2v6h6M10 14h8.500v4.500H10z" fill="#d5e6f0" stroke="#222" strokeWidth="1.500" />
        </Icon>
        图纸1
      </button>
      <button aria-label="添加图纸" className="flex w-[41px] items-start justify-center border-t border-r border-[#808080] bg-[#d4d4d4] pr-[6px]">
        <Icon size="size-4">
          <path d="M7 6h12v8h-3l-3 3H9l-2-2z" fill="#e3edf4" stroke="#5f7d92" strokeWidth="1.400" />
          <path d="M5.500 0v11M0 5.500h11M1.500 1.500l8 8M9.500 1.500l-8 8" stroke="#f08000" strokeWidth="1.500" />
          <circle cx="5.500" cy="5.500" r="2" fill="#ffe14a" stroke="none" />
        </Icon>
      </button>
      <span className="w-[31px] border-t border-[#808080] bg-[#d4d4d4]" />
      <span className="w-[362px] border-t border-r-2 border-t-[#808080] border-r-black" />
      <div className="mr-[17px] ml-[2px] flex min-w-0 flex-1 flex-col border-t border-white">
        <div className="flex h-4 items-center bg-[#f0f0f0]">
          <button aria-label="向左滚动" className="flex w-[21px] justify-center">
            <Arrow d="M7 1 3 5l4 4" />
          </button>
          <span className="h-full flex-1 bg-[#cdcdcd]" />
          <button aria-label="向右滚动" className="flex w-[70px] justify-end pr-1">
            <Arrow d="M3 1l4 4-4 4" />
          </button>
        </div>
        <div className="h-[3px] bg-black" />
      </div>
    </div>
  );
}

function UpTick() {
  return (
    <svg viewBox="0 0 6 4" className="h-1 w-[6px] shrink-0" aria-hidden="true">
      <path d="M3 0l3 4H0z" fill="#8a8a8a" />
    </svg>
  );
}

function StatusBar() {
  return (
    <footer className="flex h-[21px] shrink-0 items-center pr-px text-[15px] leading-[21px] whitespace-nowrap text-black">
      <span className="w-[605px] shrink-0 pl-px">SOLIDWORKS Premium 2025 SP5.0</span>
      <span>完全定义</span>
      <span className="ml-[18px] min-w-0 flex-1">在编辑 工程图视图12</span>
      <span className="w-[62px] shrink-0 text-[#a6a6a6]">1 : 1</span>
      <UpTick />
      <Icon box="0 0 8 14" size="h-[14px] w-2" className="mr-[5px] ml-[22px]">
        <rect width="8" height="14" rx="2" fill="#333" stroke="none" />
        <circle cx="4" cy="4" r="2.300" fill="#d8402c" stroke="none" />
        <circle cx="4" cy="10" r="2.300" fill="#3f9c35" stroke="none" />
      </Icon>
      <span className="h-[18px] w-px bg-[#cfcfcf]" />
      <span className="ml-[108px] text-[#a6a6a6]">自定义</span>
      <span className="mr-[26px] ml-[22px]">
        <UpTick />
      </span>
      <button aria-label="标签">
        <Icon size="size-[18px]">
          <path d="M1 5l7-4 10 6c1 1 1 4 0 6l-6 5L3 12z" fill="#e6e6e6" stroke="#333" strokeWidth="1.300" />
          <path d="M4 10l9 5 5-5M5 5l4 4 5-3M8 4l5 3" stroke="#444" strokeWidth="1.200" />
        </Icon>
      </button>
      <Icon box="0 0 12 12" size="size-3" className="mt-auto ml-3">
        <path d="M9 0h3v3H9zM9 4.500h3v3H9zM4.500 4.500h3v3h-3zM9 9h3v3H9zM4.500 9h3v3h-3zM0 9h3v3H0z" fill="#b5b5b5" stroke="none" />
      </Icon>
    </footer>
  );
}

export default function App() {
  return (
    <div className="flex h-screen w-full flex-col overflow-hidden border border-[#6f6f6f] bg-[#f7f7f7] font-['Open_Sans','Noto_Sans_CJK_SC',sans-serif]">
      <div className="h-[9px] shrink-0 border-b border-[#bcbcbc] bg-white" />
      <TitleBar />
      <Ribbon />

      <div className="relative flex min-h-0 flex-1">
        <div className="flex min-w-0 flex-1 flex-col bg-[linear-gradient(135deg,#ffffff_15%,#e2e5ef_40%,#dce0eb_50%,#c8cbd7_66%,#c8cbd7)]">
          <CommandTabs />
          <div className="flex min-h-0 flex-1">
            <PropertyPanel />
            <div className="relative flex min-w-0 flex-1 flex-col">
              <ViewToolbar />
              <Sheet />
              <Badge n={3} className="top-[42px] left-[218px]" />
            </div>
          </div>
        </div>

        <div className="flex w-[17px] shrink-0 flex-col pt-[298px]">
          <div className="flex min-h-0 flex-1 flex-col items-center border-l border-white bg-[#f0f0f0]">
            <button aria-label="向上滚动" className="py-[6px]">
              <Arrow d="M1 7l4-4 4 4" />
            </button>
            <span className="w-full flex-1 bg-[#cdcdcd]" />
            <button aria-label="向下滚动" className="pt-[34px] pb-1">
              <Arrow d="M1 3l4 4 4-4" />
            </button>
          </div>
        </div>
        <TaskPane />
      </div>

      <SheetTabs />
      <StatusBar />
    </div>
  );
}
